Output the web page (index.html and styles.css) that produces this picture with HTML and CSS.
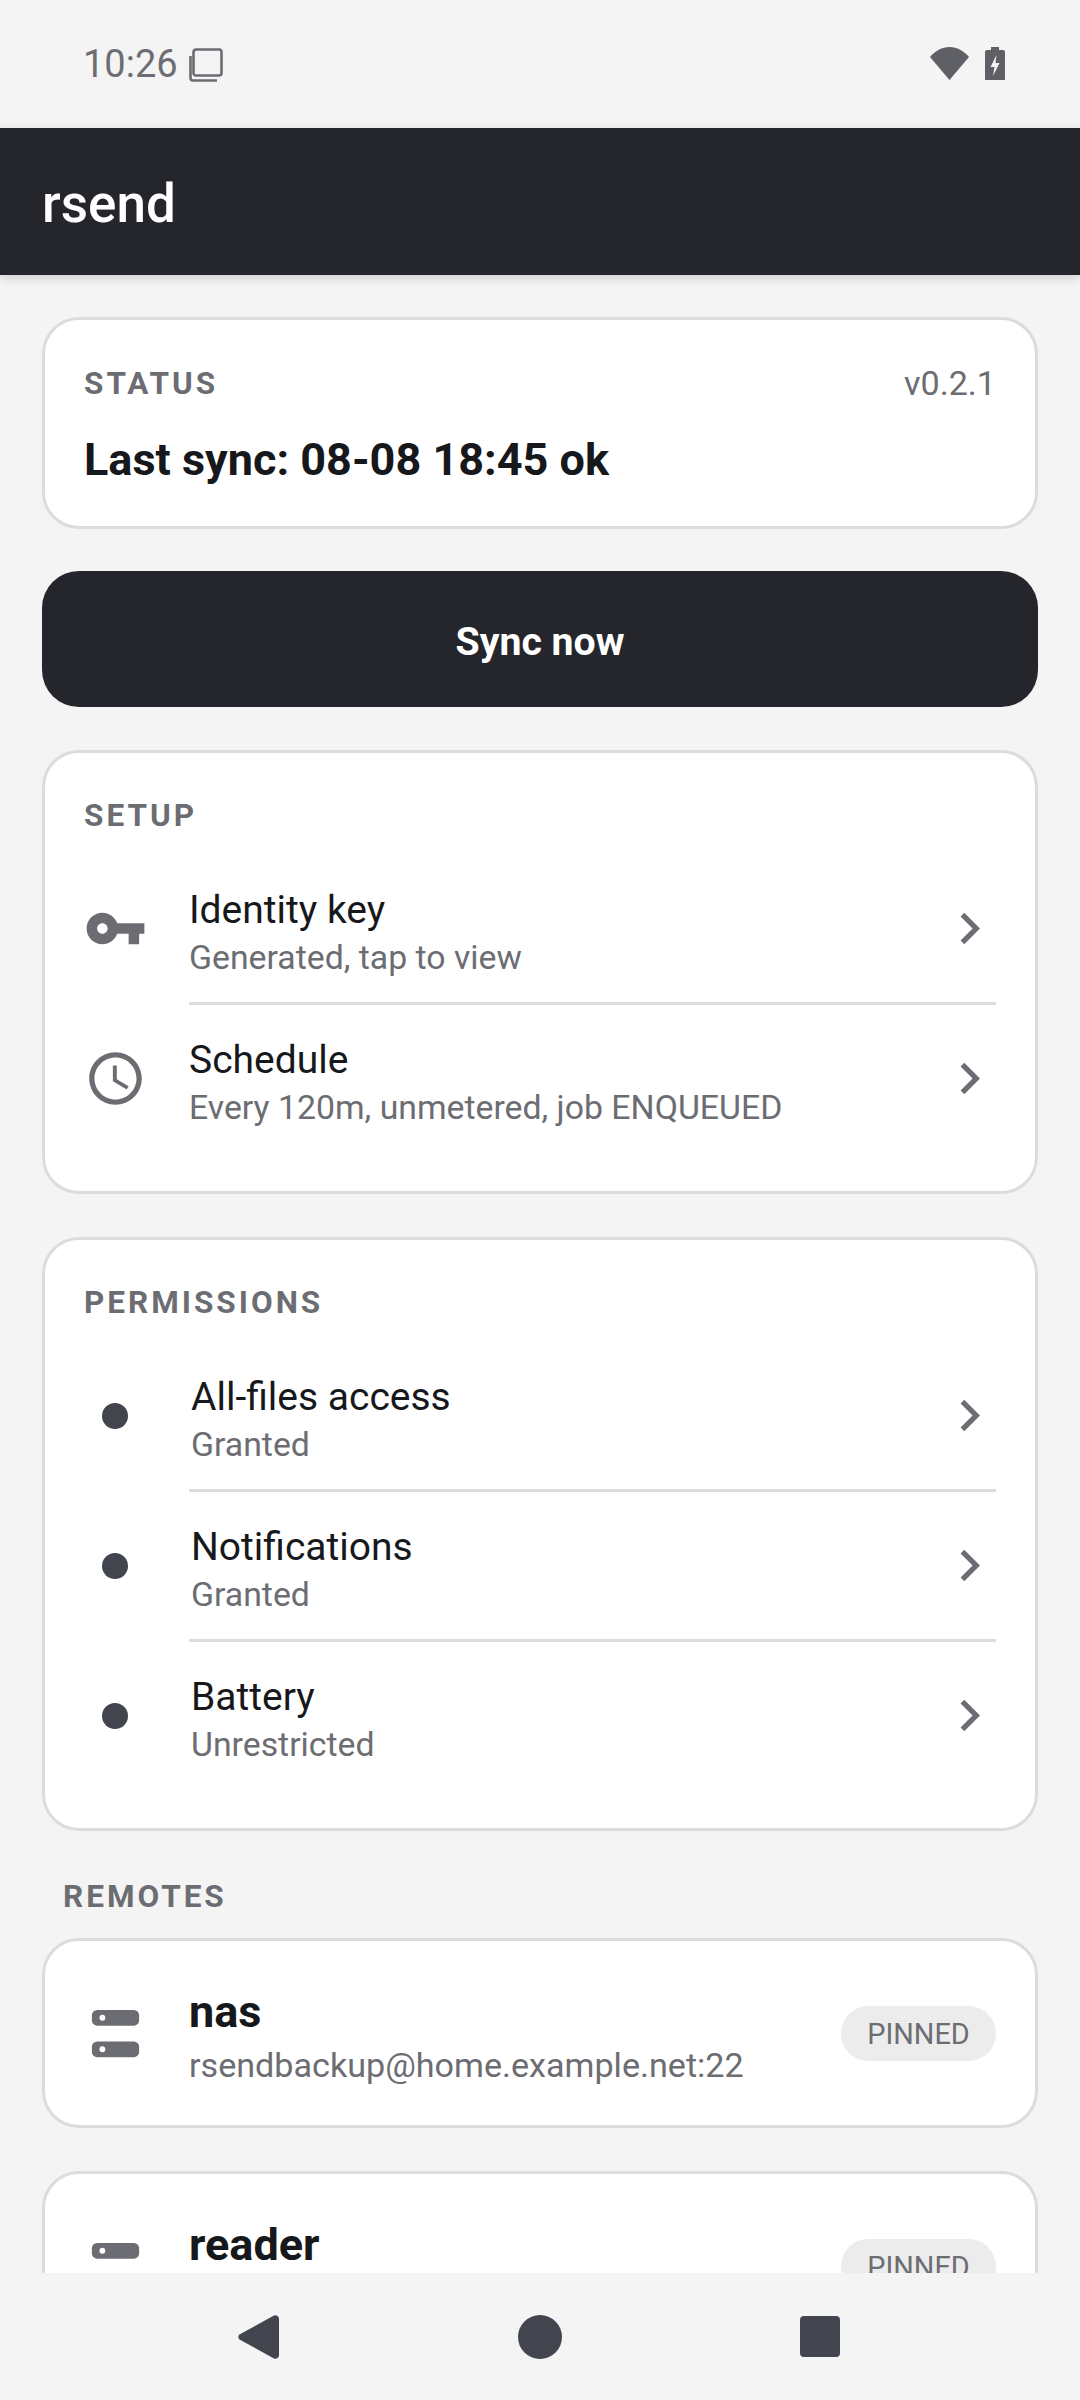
FILE: index.html
```html
<!DOCTYPE html>
<html lang="en">
<head>
    <meta charset="UTF-8">
    <meta name="viewport" content="width=device-width, initial-scale=1.0">
    <title>rsend</title>
    <link rel="stylesheet" href="styles.css">
</head>
<body>
    <div class="screen">
        <!-- Android status bar -->
        <div class="status-bar">
            <div class="status-left">
                <span class="clock">10:26</span>
                <svg class="copy-icon" viewBox="0 0 34 34"><path d="M7 1.500h23a2.500 2.500 0 0 1 2.500 2.500v21a2.500 2.500 0 0 1-2.500 2.500H7a2.500 2.500 0 0 1-2.500-2.500V4A2.500 2.500 0 0 1 7 1.500z" fill="none" stroke="#6c6d72" stroke-width="2.600"/><path d="M1.500 8v22a2.500 2.500 0 0 0 2.500 2.500h24" fill="none" stroke="#6c6d72" stroke-width="2.600"/></svg>
            </div>
            <div class="status-right">
                <svg class="wifi-icon" viewBox="0 0 39 33"><path d="M0 10C5 4 12 0 19.500 0S34 4 39 10L19.500 33z" fill="#5f6065"/></svg>
                <svg class="battery-icon" viewBox="0 0 20 33"><path d="M6 0h8v3h4a2 2 0 0 1 2 2v28H0V5a2 2 0 0 1 2-2h4z" fill="#5f6065"/><path d="M11.500 8L5.500 20h4l-1.500 9 6.500-13h-4z" fill="#f4f4f5"/></svg>
            </div>
        </div>

        <header class="app-bar">rsend</header>

        <main class="content">
            <section class="card status-card">
                <div class="status-head">
                    <span class="label">STATUS</span>
                    <span class="version">v0.2.1</span>
                </div>
                <div class="last-sync">Last sync: 08-08 18:45 ok</div>
            </section>

            <button class="sync-button">Sync now</button>

            <section class="card">
                <div class="label list-label">SETUP</div>
                <div class="row">
                    <svg class="row-icon" viewBox="0 0 24 24"><path d="M12.650 10C11.830 7.670 9.610 6 7 6c-3.310 0-6 2.690-6 6s2.690 6 6 6c2.610 0 4.830-1.670 5.650-4H17v4h4v-4h2v-4H12.650zM7 14c-1.100 0-2-.9-2-2s.9-2 2-2 2 .9 2 2-.9 2-2 2z"/></svg>
                    <div class="row-text">
                        <div class="row-title">Identity key</div>
                        <div class="row-sub">Generated, tap to view</div>
                    </div>
                    <svg class="chevron" viewBox="0 0 24 24"><path d="M10 6L8.590 7.410 13.170 12l-4.580 4.590L10 18l6-6z"/></svg>
                </div>
                <div class="divider"></div>
                <div class="row">
                    <svg class="row-icon" viewBox="0 0 24 24"><path d="M11.990 2C6.470 2 2 6.480 2 12s4.470 10 9.990 10C17.520 22 22 17.520 22 12S17.520 2 11.990 2zM12 20c-4.420 0-8-3.580-8-8s3.580-8 8-8 8 3.580 8 8-3.580 8-8 8z"/><path d="M12.500 7H11v6l5.250 3.150.75-1.230-4.500-2.670z"/></svg>
                    <div class="row-text">
                        <div class="row-title">Schedule</div>
                        <div class="row-sub">Every 120m, unmetered, job ENQUEUED</div>
                    </div>
                    <svg class="chevron" viewBox="0 0 24 24"><path d="M10 6L8.590 7.410 13.170 12l-4.580 4.590L10 18l6-6z"/></svg>
                </div>
            </section>

            <section class="card">
                <div class="label list-label">PERMISSIONS</div>
                <div class="row">
                    <span class="dot-box"><span class="dot"></span></span>
                    <div class="row-text">
                        <div class="row-title">All-files access</div>
                        <div class="row-sub">Granted</div>
                    </div>
                    <svg class="chevron" viewBox="0 0 24 24"><path d="M10 6L8.590 7.410 13.170 12l-4.580 4.590L10 18l6-6z"/></svg>
                </div>
                <div class="divider"></div>
                <div class="row">
                    <span class="dot-box"><span class="dot"></span></span>
                    <div class="row-text">
                        <div class="row-title">Notifications</div>
                        <div class="row-sub">Granted</div>
                    </div>
                    <svg class="chevron" viewBox="0 0 24 24"><path d="M10 6L8.590 7.410 13.170 12l-4.580 4.590L10 18l6-6z"/></svg>
                </div>
                <div class="divider"></div>
                <div class="row">
                    <span class="dot-box"><span class="dot"></span></span>
                    <div class="row-text">
                        <div class="row-title">Battery</div>
                        <div class="row-sub">Unrestricted</div>
                    </div>
                    <svg class="chevron" viewBox="0 0 24 24"><path d="M10 6L8.590 7.410 13.170 12l-4.580 4.590L10 18l6-6z"/></svg>
                </div>
            </section>

            <div class="label remotes-label">REMOTES</div>

            <section class="card remote">
                <svg class="row-icon" viewBox="0 0 24 24"><rect x="3" y="3" width="18" height="6" rx="2"/><rect x="3" y="15" width="18" height="6" rx="2"/><circle class="led" cx="7" cy="6" r="1.100"/><circle class="led" cx="7" cy="18" r="1.100"/></svg>
                <div class="row-text">
                    <div class="remote-name">nas</div>
                    <div class="row-sub remote-host">rsendbackup@home.example.net:22</div>
                </div>
                <span class="chip">PINNED</span>
            </section>

            <section class="card remote">
                <svg class="row-icon" viewBox="0 0 24 24"><rect x="3" y="3" width="18" height="6" rx="2"/><rect x="3" y="15" width="18" height="6" rx="2"/><circle class="led" cx="7" cy="6" r="1.100"/><circle class="led" cx="7" cy="18" r="1.100"/></svg>
                <div class="row-text">
                    <div class="remote-name">reader</div>
                    <div class="row-sub remote-host">rsendbackup@home.example.net:22</div>
                </div>
                <span class="chip">PINNED</span>
            </section>
        </main>

        <!-- Android nav bar -->
        <nav class="nav-bar">
            <svg class="nav-back" viewBox="0 0 41 44"><path d="M36 .6a3.500 3.500 0 0 1 5 2.900v37a3.500 3.500 0 0 1-5 2.900L1.500 24.500a3.300 3.300 0 0 1 0-5z"/></svg>
            <svg class="nav-home" viewBox="0 0 44 44"><circle cx="22" cy="22" r="22"/></svg>
            <svg class="nav-recent" viewBox="0 0 40 41"><rect width="40" height="41" rx="4"/></svg>
        </nav>
    </div>
</body>
</html>
```

FILE: styles.css
```css
* {
    box-sizing: border-box;
}
html, body {
    margin: 0;
    padding: 0;
}
body {
    font-family: Roboto, "Noto Sans", sans-serif;
    background-color: #f4f4f5;
    color: #17181b;
}
.screen {
    width: 1080px;
    height: 2400px;
    display: flex;
    flex-direction: column;
    overflow: hidden;
}

/* status bar */
.status-bar {
    height: 128px;
    flex: none;
    display: flex;
    align-items: center;
    justify-content: space-between;
    padding: 0 75px 1px 83px;
}
.status-left, .status-right {
    display: flex;
    align-items: center;
}
.clock {
    font-size: 38px;
    color: #6c6d72;
}
.copy-icon {
    width: 34px;
    height: 34px;
    margin-left: 11px;
    margin-top: 2px;
}
.wifi-icon {
    width: 39px;
    height: 33px;
}
.battery-icon {
    width: 20px;
    height: 33px;
    margin-left: 16px;
}

/* app bar */
.app-bar {
    height: 147px;
    flex: none;
    position: relative;
    display: flex;
    align-items: center;
    padding: 4px 0 0 42px;
    background-color: #24262b;
    color: #ffffff;
    font-size: 53px;
    font-weight: 500;
    box-shadow: 0 3px 10px rgba(0,0,0,0.16);
}

/* scrolling part */
.content {
    flex: 1;
    min-height: 0;
    overflow: hidden;
    padding: 42px 42px 0;
}
.card {
    background-color: #ffffff;
    border: 3px solid #dcdce0;
    border-radius: 37px;
    padding: 39px;
    margin-bottom: 43px;
}
.status-card {
    height: 212px;
    padding-top: 40px;
    margin-bottom: 42px;
}
.label {
    padding-top: 2px;
    font-size: 31.5px;
    font-weight: 700;
    line-height: 44px;
    letter-spacing: 0.095em;
    color: #6c6d72;
}
.status-head {
    display: flex;
    justify-content: space-between;
    align-items: center;
    margin-bottom: 24px;
}
.version {
    font-size: 34.125px;
    color: #6c6d72;
}
.last-sync {
    font-size: 45px;
    font-weight: 700;
    line-height: 60px;
}
.sync-button {
    display: block;
    width: 100%;
    height: 136px;
    margin-bottom: 43px;
    padding-top: 6px;
    border: none;
    border-radius: 37px;
    background-color: #24262b;
    color: #ffffff;
    font-family: inherit;
    font-size: 39.2px;
    font-weight: 700;
}

/* list rows */
.list-label {
    margin-bottom: 17px;
}
.row {
    height: 147px;
    display: flex;
    align-items: center;
}
.divider {
    height: 3px;
    margin-left: 105px;
    background-color: #dcdce0;
}
.row-icon {
    width: 63px;
    height: 63px;
    flex: none;
    fill: #6c6d72;
}
.row-icon .led {
    fill: #ffffff;
}
.dot-box {
    width: 65px;
    padding-right: 3px;
    flex: none;
    display: flex;
    justify-content: center;
}
.dot {
    width: 26px;
    height: 26px;
    border-radius: 50%;
    background-color: #43454e;
}
.row-text {
    flex: 1;
    min-width: 0;
    margin-left: 42px;
    padding-top: 8px;
}
.row-title {
    font-size: 39px;
    line-height: 50px;
}
.row-sub {
    font-size: 33.8px;
    line-height: 46px;
    color: #6c6d72;
}
.chevron {
    width: 63px;
    height: 63px;
    flex: none;
    margin-right: -5px;
    fill: #6c6d72;
}

/* remotes */
.remotes-label {
    padding-left: 21px;
    margin-bottom: 19px;
    margin-top: -1px;
}
.remote {
    height: 190px;
    flex: none;
    display: flex;
    align-items: center;
}
.remote-name {
    font-size: 45px;
    font-weight: 700;
    line-height: 56px;
}
.remote-host {
    font-size: 34.125px;
    line-height: 50px;
}
.chip {
    width: 155px;
    height: 55px;
    flex: none;
    display: flex;
    align-items: center;
    justify-content: center;
    padding-top: 1px;
    border-radius: 28px;
    background-color: #ececec;
    color: #6c6d72;
    font-size: 28.875px;
}

/* nav bar */
.nav-bar {
    height: 127px;
    flex: none;
    position: relative;
    background-color: #f4f4f5;
}
.nav-bar svg {
    position: absolute;
    fill: #43454e;
}
.nav-back {
    left: 238px;
    top: 42px;
    width: 41px;
    height: 44px;
}
.nav-home {
    left: 518px;
    top: 42px;
    width: 44px;
    height: 44px;
}
.nav-recent {
    left: 800px;
    top: 43px;
    width: 40px;
    height: 41px;
}
```
